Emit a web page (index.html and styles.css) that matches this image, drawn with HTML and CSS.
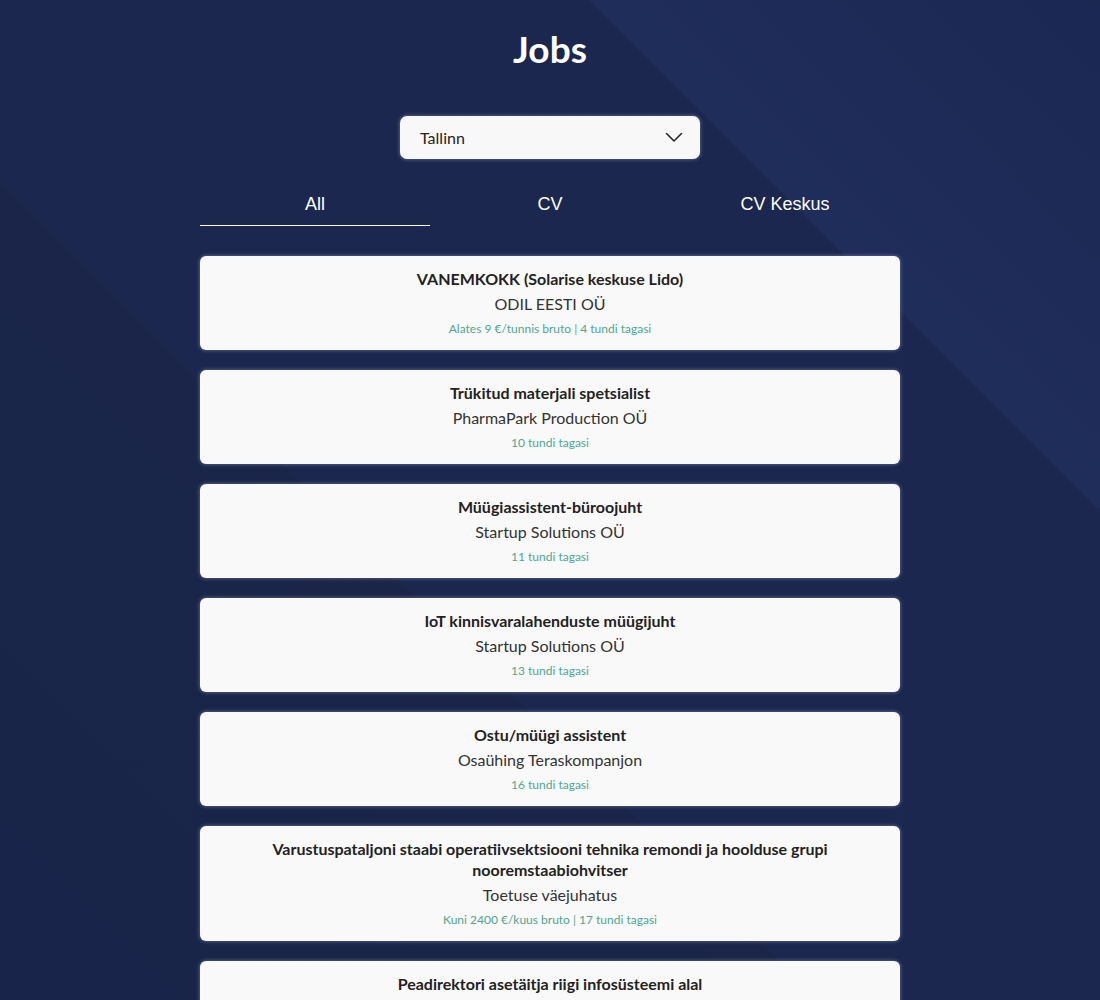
FILE: index.html
```html
<!DOCTYPE html>
<html lang="et">
<head>
<meta charset="utf-8">
<title>Jobs</title>
<link rel="stylesheet" href="styles.css">
</head>
<body>
<main class="page">
  <h1 class="title">Jobs</h1>

  <div class="select">
    <span class="select-value">Tallinn</span>
    <svg class="chevron" width="18" height="11" viewBox="0 0 18 11" aria-hidden="true">
      <path d="M1.5 1.5 L9 9 L16.5 1.5" fill="none" stroke="#222" stroke-width="1.5" stroke-linecap="round" stroke-linejoin="round"/>
    </svg>
  </div>

  <nav class="tabs">
    <div class="tab active">All</div>
    <div class="tab">CV</div>
    <div class="tab">CV Keskus</div>
  </nav>

  <section class="list">
    <article class="card">
      <h2 class="job-title">VANEMKOKK (Solarise keskuse Lido)</h2>
      <p class="company">ODIL EESTI OÜ</p>
      <p class="meta">Alates 9 €/tunnis bruto | 4 tundi tagasi</p>
    </article>
    <article class="card">
      <h2 class="job-title">Trükitud materjali spetsialist</h2>
      <p class="company">PharmaPark Production OÜ</p>
      <p class="meta">10 tundi tagasi</p>
    </article>
    <article class="card">
      <h2 class="job-title">Müügiassistent-büroojuht</h2>
      <p class="company">Startup Solutions OÜ</p>
      <p class="meta">11 tundi tagasi</p>
    </article>
    <article class="card">
      <h2 class="job-title">IoT kinnisvaralahenduste müügijuht</h2>
      <p class="company">Startup Solutions OÜ</p>
      <p class="meta">13 tundi tagasi</p>
    </article>
    <article class="card">
      <h2 class="job-title">Ostu/müügi assistent</h2>
      <p class="company">Osaühing Teraskompanjon</p>
      <p class="meta">16 tundi tagasi</p>
    </article>
    <article class="card">
      <h2 class="job-title">Varustuspataljoni staabi operatiivsektsiooni tehnika remondi ja hoolduse grupi nooremstaabiohvitser</h2>
      <p class="company">Toetuse väejuhatus</p>
      <p class="meta">Kuni 2400 €/kuus bruto | 17 tundi tagasi</p>
    </article>
    <article class="card">
      <h2 class="job-title">Peadirektori asetäitja riigi infosüsteemi alal</h2>
    </article>
  </section>
</main>
</body>
</html>
```

FILE: styles.css
```css
html {
  scrollbar-width: none;
}

body {
  margin: 0;
  min-height: 1000px;
  font-family: "Lato", "Noto Sans", sans-serif;
  background-color: #1b274f;
  background-image:
    linear-gradient(45deg, transparent 1124px, #1f2d5b 1124px, #1b2852 1485px),
    linear-gradient(225deg, transparent 906px, #1a2549 906px, #19244a 1485px);
  background-attachment: fixed;
  background-repeat: no-repeat;
}

.page {
  width: 700px;
  margin: 0 auto;
  padding-top: 24px;
  display: flex;
  flex-direction: column;
  align-items: center;
}

.title {
  margin: 0;
  font-size: 37px;
  line-height: 50px;
  font-weight: 700;
  color: #ffffff;
}

.select {
  margin-top: 42px;
  width: 300px;
  height: 43px;
  box-sizing: border-box;
  padding: 0 17px 0 20px;
  display: flex;
  align-items: center;
  justify-content: space-between;
  background: #f8f8f8;
  border-radius: 7px;
  box-shadow: 0 0 4px rgba(170, 182, 220, 0.55);
}

.select-value {
  font-size: 16px;
  color: #222;
}

.chevron {
  display: block;
}

.tabs {
  margin-top: 22px;
  width: 700px;
  display: flex;
  gap: 5px;
}

.tab {
  flex: 1;
  text-align: center;
  font-family: "Liberation Sans", Arial, sans-serif;
  font-size: 18px;
  padding-top: 3px;
  line-height: 41px;
  color: #ffffff;
  border-bottom: 1px solid transparent;
}

.tab.active {
  border-bottom-color: #ffffff;
}

.list {
  margin-top: 30px;
  width: 700px;
  display: flex;
  flex-direction: column;
  gap: 20px;
}

.card {
  background: #f9f9f9;
  border-radius: 6px;
  padding: 12px 40px;
  text-align: center;
  box-shadow: 0 0 4px rgba(170, 182, 220, 0.55);
}

.job-title {
  margin: 0;
  font-size: 16px;
  line-height: 21px;
  font-weight: 700;
  color: #222;
}

.company {
  margin: 4px 0 0;
  font-size: 16px;
  line-height: 22px;
  color: #333;
}

.meta {
  margin: 5px 0 0;
  font-size: 12px;
  line-height: 18px;
  color: #4fa690;
}
```
